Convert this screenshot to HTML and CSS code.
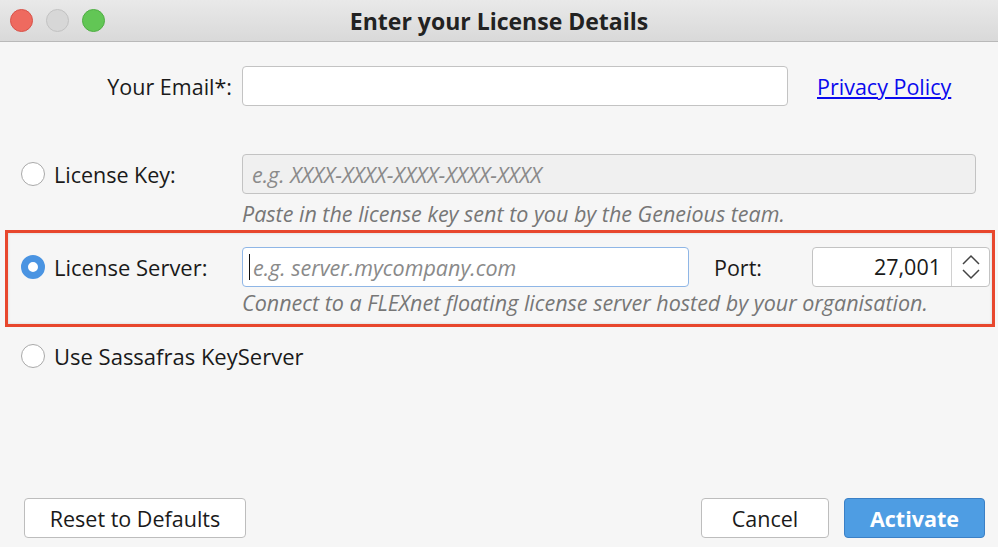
FILE: index.html
```html
<!DOCTYPE html>
<html lang="en">
<head>
    <meta charset="UTF-8">
    <title>Enter your License Details</title>
    <link rel="stylesheet" href="styles.css">
</head>
<body>
    <div class="window">
        <div class="titlebar">
            <div class="lights">
                <span class="light close"></span>
                <span class="light min"></span>
                <span class="light max"></span>
            </div>
            <div class="title">Enter your License Details</div>
        </div>

        <div class="content">
            <div class="row email-row">
                <label class="side right" for="email">Your Email*:</label>
                <input type="text" id="email" class="field email">
                <a href="#" class="link">Privacy Policy</a>
            </div>

            <div class="row key-row">
                <div class="side">
                    <span class="radio"></span>
                    <span class="label">License Key:</span>
                </div>
                <div class="field key disabled">e.g. XXXX-XXXX-XXXX-XXXX-XXXX</div>
            </div>
            <div class="hint">Paste in the license key sent to you by the Geneious team.</div>

            <div class="highlight">
                <div class="row">
                    <div class="side">
                        <span class="radio checked"></span>
                        <span class="label">License Server:</span>
                    </div>
                    <div class="field server focused"><span class="caret"></span>e.g. server.mycompany.com</div>
                    <span class="port-label">Port:</span>
                    <div class="spinner">
                        <span class="spin-value">27,001</span>
                        <span class="spin-arrows">
                            <svg width="20" height="30" viewBox="0 0 20 30">
                                <path d="M2 12 L10 4 L18 12" fill="none" stroke="#444" stroke-width="1.5"/>
                                <path d="M2 18 L10 26 L18 18" fill="none" stroke="#444" stroke-width="1.5"/>
                            </svg>
                        </span>
                    </div>
                </div>
                <div class="hint">Connect to a FLEXnet floating license server hosted by your organisation.</div>
            </div>

            <div class="row sassafras-row">
                <div class="side wide">
                    <span class="radio"></span>
                    <span class="label">Use Sassafras KeyServer</span>
                </div>
            </div>

            <div class="buttons">
                <button class="btn reset">Reset to Defaults</button>
                <div class="btn-group">
                    <button class="btn cancel">Cancel</button>
                    <button class="btn primary">Activate</button>
                </div>
            </div>
        </div>
    </div>
</body>
</html>
```

FILE: styles.css
```css
* {
    box-sizing: border-box;
}
body {
    margin: 0;
    font-family: 'Open Sans', 'Noto Sans', Arial, sans-serif;
    color: #1a1a1a;
    background-color: #f6f6f6;
}
.window {
    width: 998px;
    height: 547px;
    display: flex;
    flex-direction: column;
    background-color: #f6f6f6;
}
.titlebar {
    height: 42px;
    flex: none;
    display: flex;
    align-items: center;
    position: relative;
    background: linear-gradient(#e9e9e9, #d9d9d9);
    border-bottom: 1px solid #b9b9b9;
}
.lights {
    display: flex;
    gap: 13px;
    padding-left: 10px;
}
.light {
    width: 23px;
    height: 23px;
    border-radius: 50%;
}
.close {
    background-color: #ee6a5f;
    border: 1px solid #d85249;
}
.min {
    background-color: #d7d7d7;
    border: 1px solid #c2c2c2;
}
.max {
    background-color: #62c655;
    border: 1px solid #4fae43;
}
.title {
    position: absolute;
    left: 0;
    right: 0;
    text-align: center;
    font-weight: bold;
    font-size: 23px;
    color: #222;
}
.content {
    flex: 1;
    display: flex;
    flex-direction: column;
    padding-top: 24px;
}
.row {
    display: flex;
    align-items: center;
}
.side {
    width: 242px;
    flex: none;
    display: flex;
    align-items: center;
    padding-left: 21px;
    font-size: 21.5px;
    white-space: nowrap;
}
.side.wide {
    width: auto;
    font-size: 22px;
}
.side.right {
    justify-content: flex-end;
    padding-right: 10px;
}
.label {
    margin-left: 9px;
}
.radio {
    width: 24px;
    height: 24px;
    border-radius: 50%;
    border: 1px solid #a9a9a9;
    background-color: #fff;
    flex: none;
}
.radio.checked {
    border: 7.5px solid #4a94e2;
    background-color: #fff;
}
.field {
    height: 40px;
    border: 1px solid #c3c3c3;
    border-radius: 4px;
    background-color: #fff;
    font-family: inherit;
    font-size: 21.5px;
    padding: 0 9px;
    display: flex;
    align-items: center;
    white-space: nowrap;
}
.email {
    width: 546px;
}
.link {
    margin-left: 29px;
    color: #0a0aee;
    font-size: 21.5px;
}
.key-row {
    margin-top: 48px;
}
.key {
    width: 734px;
    background-color: #f0f0f0;
    color: #8a8a8a;
    font-style: italic;
}
.hint {
    padding-left: 242px;
    font-size: 21.5px;
    font-style: italic;
    color: #777;
    line-height: 26px;
    margin-top: 7px;
    white-space: nowrap;
}
.highlight {
    margin: 3px 3px 0 5px;
    border: 3px solid #e8472d;
    box-shadow: inset 0 0 3px rgba(0, 0, 0, 0.15);
    padding: 14px 0 8px 0;
}
.highlight .side {
    width: 234px;
    padding-left: 13px;
    font-size: 22px;
}
.highlight .hint {
    padding-left: 234px;
    margin-top: 3px;
}
.server {
    width: 447px;
    border-color: #8fb6e6;
    color: #8a8a8a;
    font-style: italic;
    padding-left: 6px;
}
.caret {
    width: 1px;
    height: 26px;
    background-color: #111;
    margin-right: 3px;
}
.port-label {
    font-size: 21.5px;
    margin-left: 25px;
    width: 98px;
}
.spinner {
    width: 178px;
    height: 40px;
    border: 1px solid #c3c3c3;
    border-radius: 4px;
    background-color: #fff;
    display: flex;
}
.spin-value {
    flex: 1;
    text-align: right;
    font-size: 21.5px;
    padding-right: 10px;
    line-height: 38px;
}
.spin-arrows {
    width: 38px;
    border-left: 1px solid #d0d0d0;
    display: flex;
    align-items: center;
    justify-content: center;
}
.sassafras-row {
    margin-top: 14px;
}
.buttons {
    margin-top: auto;
    display: flex;
    justify-content: space-between;
    padding: 0 13px 9px 24px;
}
.btn-group {
    display: flex;
    gap: 15px;
}
.btn {
    height: 40px;
    border: 1px solid #bdbdbd;
    border-radius: 4px;
    background-color: #fff;
    font-family: inherit;
    font-size: 21.5px;
    color: #1a1a1a;
    padding: 0;
}
.reset {
    width: 222px;
}
.cancel {
    width: 128px;
}
.primary {
    width: 141px;
    background-color: #4e9de3;
    border-color: #3b80c6;
    color: #fff;
    font-weight: bold;
}
```
